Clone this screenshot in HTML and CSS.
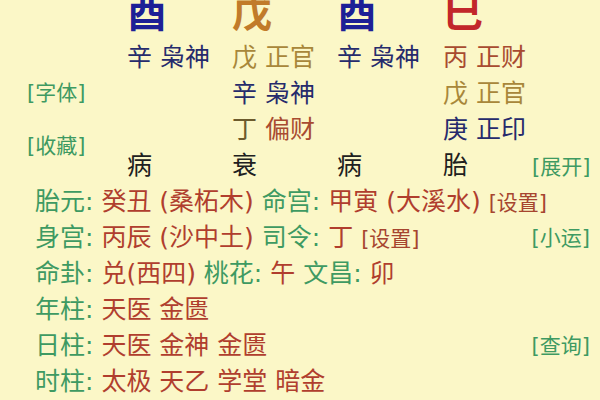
FILE: index.html
```html
<!DOCTYPE html>
<html lang="zh-CN">
<head>
<meta charset="utf-8">
<title>八字排盘</title>
<link rel="stylesheet" href="styles.css">
</head>
<body>
<div class="page">
  <div class="top">
    <div class="aside">
      <span class="btn">[字体]</span>
      <span class="btn">[收藏]</span>
    </div>
    <div class="big c2 navy-b">酉</div>
    <div class="big c3 orange-b">戊</div>
    <div class="big c4 navy-b">酉</div>
    <div class="big c5 red-b">巳</div>

    <div class="cell c2 navy">辛 枭神</div>
    <div class="cell c3 olive">戊 正官</div>
    <div class="cell c4 navy">辛 枭神</div>
    <div class="cell c5 brown">丙 正财</div>

    <div class="cell c3 navy">辛 枭神</div>
    <div class="cell c5 olive">戊 正官</div>

    <div class="cell c3"><span class="dark-olive">丁</span> <span class="brown">偏财</span></div>
    <div class="cell c5 navy">庚 正印</div>

    <div class="cell c2 ink">病</div>
    <div class="cell c3 ink">衰</div>
    <div class="cell c4 ink">病</div>
    <div class="cell c5 ink">胎</div>
    <div class="cell c6"><span class="btn">[展开]</span></div>
  </div>

  <div class="rows">
    <div class="row">
      <span class="line"><span class="lab">胎元:</span> <span class="val">癸丑 (桑柘木)</span> <span class="lab">命宫:</span> <span class="val">甲寅 (大溪水)</span> <span class="set">[设置]</span></span>
    </div>
    <div class="row">
      <span class="line"><span class="lab">身宫:</span> <span class="val">丙辰 (沙中土)</span> <span class="lab">司令:</span> <span class="val">丁</span> <span class="set">[设置]</span></span>
      <span class="btn right">[小运]</span>
    </div>
    <div class="row">
      <span class="line"><span class="lab">命卦:</span> <span class="val">兑(西四)</span> <span class="lab">桃花:</span> <span class="val">午</span> <span class="lab">文昌:</span> <span class="val">卯</span></span>
    </div>
    <div class="row">
      <span class="line"><span class="lab">年柱:</span> <span class="val">天医 金匮</span></span>
    </div>
    <div class="row">
      <span class="line"><span class="lab">日柱:</span> <span class="val">天医 金神 金匮</span></span>
      <span class="btn right">[查询]</span>
    </div>
    <div class="row">
      <span class="line"><span class="lab">时柱:</span> <span class="val">太极 天乙 学堂 暗金</span></span>
    </div>
  </div>
</div>
</body>
</html>
```

FILE: styles.css
```css
html, body {
  margin: 0;
  padding: 0;
  background: #fbf7c7;
}
body {
  font-family: "DejaVu Sans", "Noto Sans CJK SC", sans-serif;
  font-size: 25px;
  color: #222;
}
.page {
  width: 600px;
  height: 400px;
  overflow: hidden;
  background: #fbf7c7;
}
.top {
  display: grid;
  grid-template-columns: 127px 105px 105px 106px 89px 68px;
  grid-template-rows: 40px repeat(4, 36px);
}
.aside {
  grid-column: 1;
  grid-row: 1 / 6;
  display: flex;
  flex-direction: column;
  gap: 17px;
  padding: 75px 0 0 27px;
}
.btn {
  font-size: 21px;
  line-height: 36px;
  color: #3e9a62;
  white-space: nowrap;
}
.big {
  grid-row: 1;
  font-size: 40px;
  line-height: 40px;
  font-weight: bold;
  margin-top: -7px;
  white-space: nowrap;
}
.cell {
  line-height: 36px;
  white-space: nowrap;
}
.c2 { grid-column: 2; }
.c3 { grid-column: 3; }
.c4 { grid-column: 4; }
.c5 { grid-column: 5; }
.c6 { grid-column: 6; }

.navy-b { color: #1d1f96; }
.orange-b { color: #c17b2a; }
.red-b { color: #c2262a; }
.navy { color: #262b6c; }
.olive { color: #a8873a; }
.brown { color: #a84b30; }
.dark-olive { color: #6c5a2c; }
.ink { color: #202020; }

.rows {
  display: flex;
  flex-direction: column;
}
.row {
  display: flex;
  align-items: center;
  height: 36px;
  line-height: 36px;
  padding: 0 10px 0 35px;
}
.line { white-space: pre; }
.lab { color: #3e9a62; }
.val { color: #b03e2e; }
.set {
  color: #a6452f;
  font-size: 21px;
}
.right { margin-left: auto; }
```
